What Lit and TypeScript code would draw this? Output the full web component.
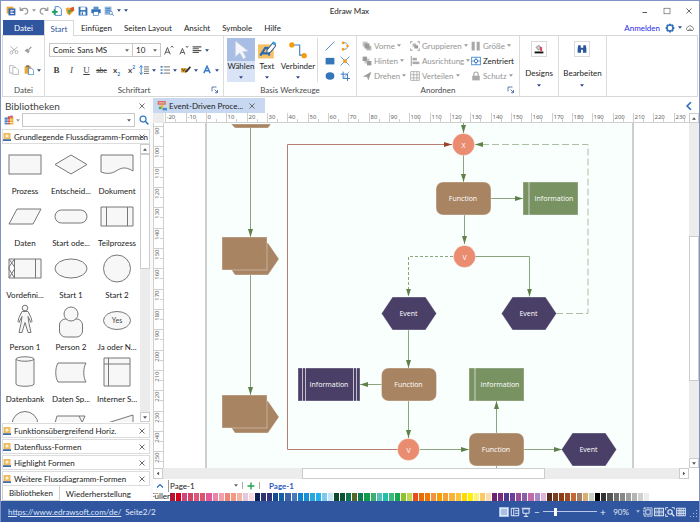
import { LitElement, html, svg, css, nothing } from "lit";
import { customElement, property } from "lit/decorators.js";
import { classMap } from "lit/directives/class-map.js";

const ICONS: Record<string, unknown> = {
  app: svg`<rect x="1" y="1" width="11" height="11" fill="#e9a83b"/><rect x="4" y="4" width="11" height="11" fill="#2f62b0"/><path d="M7 7h6M7 9.500h4M7 12h6" stroke="#fff" stroke-width="1.4"/>`,
  undo: svg`<path d="M2 2v5h5M2.500 6.500C6 2 14 3 14 8c0 3-2 5-5 5" fill="none" stroke="#9a9a9a" stroke-width="2"/>`,
  redo: svg`<path d="M14 2v5H9M13.500 6.500C10 2 2 3 2 8c0 3 2 5 5 5" fill="none" stroke="#9a9a9a" stroke-width="2"/>`,
  newdoc: svg`<path d="M5 1h6l4 4v10H5z" fill="#fff" stroke="#3f7fc4" stroke-width="1.4"/><path d="M4 5v9M0 9.500h9" stroke="#17a05e" stroke-width="2.800"/>`,
  open: svg`<path d="M1 4l5-2 2 2 6-1-1 6-6 6-4-3z" fill="#eda833"/><path d="M8 3l6-2 1 6-5 2z" fill="#d9532f"/><path d="M4 7l6-1-3 7z" fill="#4b9b4a"/>`,
  save: svg`<path d="M1 1h12l2 2v12H1z" fill="#2f6fb7"/><rect x="4" y="2" width="8" height="4.500" fill="#fff"/><rect x="4" y="9" width="8" height="5" fill="#fff"/><rect x="6" y="10" width="2" height="4" fill="#2f6fb7"/>`,
  print: svg`<rect x="4" y="1" width="8" height="4" fill="#5b8fca"/><rect x="0.500" y="5" width="15" height="6.500" rx="1" fill="#2f6fb7"/><rect x="4" y="9" width="8" height="6" fill="#fff" stroke="#2f6fb7"/>`,
  preview: svg`<rect x="1" y="1" width="11" height="13" fill="#8fb4de"/><path d="M3 4h7M3 7h7M3 10h4" stroke="#2f6fb7"/><circle cx="11" cy="11" r="2.500" fill="#fff" stroke="#2f6fb7"/><path d="M13 13l2.500 2.500" stroke="#2f6fb7" stroke-width="1.500"/>`,
  cut: svg`<path d="M2 2l9 8M14 3L5 10" stroke="#a5a5a5" stroke-width="1.300"/><circle cx="4" cy="12" r="2.300" fill="none" stroke="#a5a5a5" stroke-width="1.300"/><circle cx="12" cy="11.500" r="2.300" fill="none" stroke="#a5a5a5" stroke-width="1.300"/>`,
  brush: svg`<path d="M14 1l1.500 1.500-5 5L9 6z" fill="#8c8c8c"/><path d="M7 5l4.500 4.500-3 5.500L1 9z" fill="#a0a0a0"/>`,
  copy: svg`<path d="M1 1h6l3 3v9H1z" fill="#fff" stroke="#a8a8a8" stroke-width="1.200"/><path d="M6 4h5l4 4v7H6z" fill="#fff" stroke="#a8a8a8" stroke-width="1.200"/>`,
  paste: svg`<rect x="1" y="2" width="10" height="12" fill="#eba83a"/><rect x="3.500" y="0.500" width="5" height="3" fill="#6d6d6d"/><path d="M7 5h5l3.500 3.500V15.500H7z" fill="#fff" stroke="#3f7fc4" stroke-width="1.300"/>`,
  align: svg`<path d="M1 3h14M1 6h10M1 9h14M1 12h10" stroke="#555" stroke-width="1.700"/>`,
  spacing: svg`<path d="M3.500 1v14M1 4l2.500-3L6 4M1 12l2.500 3L6 12" fill="none" stroke="#3f87cf" stroke-width="1.600"/><path d="M8 3h8M8 6.500h8M8 10h8M8 13.500h8" stroke="#555" stroke-width="1.300"/>`,
  list: svg`<path d="M1 3h3M1 8h3M1 13h3" stroke="#3f7fc4" stroke-width="2.600"/><path d="M6 3h10M6 8h10M6 13h10" stroke="#555" stroke-width="1.300"/>`,
  marker: svg`<path d="M0 5h9v7H0z" fill="#e39a22"/><path d="M7 9l7-7 2 2-6 7-4 1z" fill="#39393c"/><path d="M2 6l2 4 2-4" stroke="#333" fill="none" stroke-width="1.200"/>`,
  fontcolor: svg`<path d="M3 13L8 2l5 11M5 9h6" fill="none" stroke="#3b7dc6" stroke-width="2.400"/>`,
  pointer: svg`<path d="M3 0v14l4-3.500 3 5.500 2.500-1.400-3-5.200 5-.4z" fill="#f4f6fa" stroke="#c4cbdc" stroke-width="0.500"/>`,
  text: svg`<rect x="0" y="3" width="14" height="12.500" fill="#f6c169"/><path d="M2 13L6.500 6h2l1.500 7M4 11h5.500" stroke="#2c6bb0" stroke-width="2" fill="none"/><path d="M8 8l5-6 3 2-5 6-3 1z" fill="#fff" stroke="#2c5c95" stroke-width="0.900"/><path d="M13 1l3 2" stroke="#3fa0d8" stroke-width="2"/>`,
  connector: svg`<path d="M3 3.500h6.500v9H13" fill="none" stroke="#3f7fc4" stroke-width="1"/><circle cx="2.500" cy="3.500" r="2.300" fill="#f59a0a"/><circle cx="13.500" cy="13" r="2.300" fill="#f59a0a"/>`,
  line: svg`<path d="M1 15L15 1" stroke="#3f7fc4" stroke-width="1.400"/>`,
  arc: svg`<path d="M4 2.500c8 0 8 3 8 5.500s0 5.500-8 5.500" fill="none" stroke="#3f7fc4" stroke-width="1.200"/><circle cx="5" cy="2.800" r="2.200" fill="#f59a0a"/><circle cx="12" cy="8" r="2" fill="#f59a0a"/><circle cx="5" cy="13.200" r="2.200" fill="#f59a0a"/>`,
  rect: svg`<rect x="1" y="3" width="14" height="10.500" fill="#3576b8"/>`,
  cross: svg`<path d="M1 1l14 14M15 1L1 15" stroke="#3f7fc4" stroke-width="1.300"/><circle cx="8" cy="8" r="3" fill="#f59a0a"/>`,
  ellipse: svg`<ellipse cx="8" cy="8" rx="7" ry="6" fill="#3576b8"/>`,
  crop: svg`<path d="M5 1v11h11M1 5h11v11" fill="none" stroke="#3f7fc4" stroke-width="1.600"/><path d="M5 12L15 1" stroke="#3f7fc4"/>`,
  front: svg`<rect x="1" y="1" width="8" height="8" fill="#c4c4c4"/><rect x="7" y="8" width="8" height="7" fill="#b4b4b4"/><rect x="4" y="4" width="8" height="8" fill="#9a9a9a"/>`,
  back: svg`<rect x="4" y="4" width="8" height="8" fill="#c8c8c8"/><rect x="1" y="1" width="7" height="7" fill="#9a9a9a"/><rect x="8" y="8" width="7" height="7" fill="#9a9a9a"/>`,
  rotate: svg`<path d="M1 9L15 1l-5 14-2-6z" fill="#9a9a9a"/>`,
  group: svg`<rect x="4" y="4" width="6" height="5" fill="#b8b8b8"/><rect x="7" y="7" width="6" height="5" fill="#999"/><path d="M1 4V1h3M12 1h3v3M15 12v3h-3M4 15H1v-3" fill="none" stroke="#999" stroke-width="1.500"/>`,
  alignleft: svg`<path d="M2 0v16" stroke="#999" stroke-width="1.500"/><rect x="4" y="3" width="7" height="4" fill="#aaa"/><rect x="4" y="9" width="11" height="4" fill="#aaa"/>`,
  distribute: svg`<path d="M1 1h14v14H1zM1 6h14M1 11h14M6 1v14M11 1v14" fill="none" stroke="#a0a0a0" stroke-width="1.200"/>`,
  size: svg`<path d="M1 1h5v14H1zM9 1h5v14H9z" fill="#a8a8a8"/>`,
  center: svg`<rect x="1" y="2" width="14" height="12" fill="none" stroke="#4a8fd0" stroke-width="1.500"/><circle cx="8" cy="8" r="2.800" fill="none" stroke="#2f6fb7" stroke-width="1.500"/><path d="M8 2v3M8 11v3M1 8h4M11 8h4" stroke="#4a8fd0" stroke-width="1.300"/>`,
  lock: svg`<path d="M4.500 8V5a3.500 3.500 0 017 0v3" fill="none" stroke="#aaa" stroke-width="1.800"/><rect x="2" y="7.500" width="12" height="7.500" fill="#aaa"/>`,
  bucket: svg`<path d="M3 5l5-3 4 5-5 3z" fill="#c9c9c9" stroke="#777" stroke-width="0.900"/><path d="M9 4l4 1v6h-3z" fill="#d94a5c"/><rect x="1" y="12" width="14" height="3" fill="#111"/>`,
  find: svg`<path d="M2 2h4v4h4V2h4l1 5v7H9.500V9h-3v5H1V7z" fill="#2b579a"/>`,
  gear: svg`<path d="M8 1v14M1 8h14M3 3l10 10M13 3L3 13" stroke="#2f6fb7" stroke-width="3"/><circle cx="8" cy="8" r="4.800" fill="#fff" stroke="#2f6fb7" stroke-width="2.400"/>`,
  cloud: svg`<path d="M4 12a3 3 0 01.5-5.500 4 4 0 017 0A3 3 0 0112 12zM5 12l3-3 3 3" fill="none" stroke="#666" stroke-width="1.300"/>`,
  min: svg`<path d="M3 11h9" stroke="#555" stroke-width="2"/>`,
  max: svg`<rect x="2" y="2.500" width="12" height="11" fill="none" stroke="#666" stroke-width="1.400"/>`,
  close: svg`<path d="M3 3l10 10M13 3L3 13" stroke="#555" stroke-width="1.700"/>`,
  launcher: svg`<path d="M2 11V2h9M7 7l6 6M13 8v5.500H8" fill="none" stroke="#3a5a94" stroke-width="1.600"/>`,
  books: svg`<rect x="1" y="4" width="5" height="11" fill="#3f7fc4"/><rect x="6" y="2" width="4" height="13" fill="#d9533a"/><rect x="10" y="3" width="5" height="12" fill="#f0a72f"/><path d="M1 8h14M1 12h14" stroke="#fff"/><rect x="10" y="1" width="4" height="3" fill="#c0489a"/>`,
  search: svg`<circle cx="6.500" cy="6.500" r="4.800" fill="none" stroke="#2f76c0" stroke-width="1.900"/><path d="M10 10l5 5" stroke="#2f76c0" stroke-width="2.400"/>`,
  library: svg`<rect x="1" y="0" width="14" height="13" fill="#f0bb5e"/><circle cx="8" cy="6" r="3.200" fill="#fff3d8"/><rect x="0" y="12.500" width="16" height="3.500" fill="#3d6ba8"/>`,
  doc: svg`<rect x="1" y="0" width="13" height="6" rx="1" fill="#dc6c5c"/><path d="M3 3h9" stroke="#fff"/><rect x="6" y="6" width="4" height="7" fill="#f0bb3e"/><rect x="3" y="9" width="4" height="4" fill="#4ba864"/><rect x="9" y="11" width="7" height="4" fill="#3f8fd4"/>`,
  left: svg`<path d="M11 2L5 8l6 6" fill="none" stroke="#2a6cc0" stroke-width="2.600"/>`,
  up: svg`<path d="M2 11l6-6 6 6" fill="none" stroke="#2a6cc0" stroke-width="2.400"/>`,
  plus: svg`<path d="M8 1v14M1 8h14" stroke="#22a552" stroke-width="2.800"/>`,
  view1: svg`<rect x="2" y="2" width="12" height="12" fill="#a9bfe6" stroke="#eef3fc" stroke-width="1.800"/>`,
  view2: svg`<path d="M2 2h12v12H2zM6 2v12M8 6h6M8 10h6" fill="none" stroke="#e4ebf8" stroke-width="1.600"/>`,
  view3: svg`<path d="M1 2h14M3 3h10v7H3zM8 10v5M4.500 15h7" fill="none" stroke="#e4ebf8" stroke-width="1.600"/>`,
  fit: svg`<rect x="4.500" y="4.500" width="7" height="7" fill="none" stroke="#e4ebf8" stroke-width="1.400"/><path d="M1.500 1.500h13v13h-13z" fill="none" stroke="#e4ebf8" stroke-width="1.600" stroke-dasharray="4 1"/>`,
  pages: svg`<path d="M1 2h14v12H1zM8 2v12M1 8h14" fill="none" stroke="#e4ebf8" stroke-width="1.700"/><path d="M3 5h3M10 5h3M3 11h3M10 11h3" stroke="#e4ebf8"/>`,
  zoomarea: svg`<path d="M1 5V1h4M1 11v4h4M11 1h4v3" fill="none" stroke="#e4ebf8" stroke-width="1.400"/><circle cx="8" cy="8" r="3.500" fill="none" stroke="#e4ebf8" stroke-width="1.800"/><path d="M10.500 10.500l4.500 4.500" stroke="#e4ebf8" stroke-width="2.200"/>`,
  grid: svg`<path d="M1 2h14v12H1zM1 6h14M1 10h14M5 2v12M8 2v12M11.500 2v12" fill="none" stroke="#e4ebf8" stroke-width="1.500"/>`,
  larger: svg`<path d="M1 15L5.500 4L10 15M3 11.500h5" fill="none" stroke="#555" stroke-width="1.600"/><path d="M11 4l2-2.500L15 4" fill="none" stroke="#444" stroke-width="1.300"/>`,
  smaller: svg`<path d="M1.500 15L5.500 5.500L9.500 15M3.500 12h4" fill="none" stroke="#555" stroke-width="1.600"/><path d="M11 1.500L13 4l2-2.500" fill="none" stroke="#444" stroke-width="1.300"/>`,
};

const icon = (name: string, size = "") =>
  html`<svg class="icon ${size}" viewBox="0 0 16 16" aria-hidden="true">${ICONS[name]}</svg>`;

const caret = (kind = "") =>
  html`<svg class="caret ${kind}" viewBox="0 0 5 3" aria-hidden="true"><path d="M0 0h5L2.500 3z" /></svg>`;

const iconButton = (name: string, label: string, size = "") =>
  html`<button class="bare" aria-label=${label}>${icon(name, size)}</button>`;

const shared = css`
  * { box-sizing: border-box; }
  button, input, select { font: inherit; color: inherit; margin: 0; padding: 0; border: 0; background: none; border-radius: 0; outline: 0; }
  button { display: flex; align-items: center; justify-content: center; white-space: nowrap; }
  .icon { width: 10px; height: 10px; flex: none; display: block; }
  .icon.s { width: 8px; height: 8px; }
  .icon.m { width: 12px; height: 12px; }
  .icon.l { width: 18px; height: 18px; }
  .caret { width: 4px; height: 3px; flex: none; fill: #2f4a86; display: block; }
  .caret.gray { fill: #999; }
  .caret.dark { fill: #666; }
`;

/* ---------- Title bar, tabs and ribbon ---------- */

@customElement("app-ribbon")
class AppRibbon extends LitElement {
  static styles = [shared, css`
    :host { display: block; flex: none; }
    .title { display: grid; grid-template-columns: 1fr auto 1fr; align-items: center; height: 19px; padding: 0 6px 0 5px; }
    .title h1 { margin: 0; font-size: 8px; font-weight: 500; color: #333; }
    .quick, .quick div { display: flex; align-items: center; gap: 3px; }
    .win { display: flex; justify-content: flex-end; gap: 14px; }
    .tabs { display: flex; height: 15px; padding-left: 2px; }
    .tabs > button { padding: 0 6px; }
    .tabs .file { width: 41px; background: #2f559f; color: #fff; }
    .tabs .active { width: 30px; margin-right: 1px; padding: 0; border: 1px solid #d8d8d8; border-bottom: 0; color: #2f559f; background: #fff; margin-bottom: -1px; z-index: 1; }
    .account { display: flex; align-items: center; gap: 3px; margin-left: auto; padding-right: 4px; }
    .account a { color: #2b2bea; text-decoration: none; margin-right: 2px; }
    .ribbon { display: flex; height: 62px; border: 1px solid #d8d8d8; margin: 0 1px; }
    .group { display: flex; flex-direction: column; border-right: 1px solid #dcdcdc; padding-top: 2px; flex: none; }
    .body { flex: 1; display: flex; }
    .name { height: 13px; display: flex; align-items: center; justify-content: center; position: relative; color: #4a4a4a; }
    .name button { position: absolute; right: 4px; }
    .clip { width: 42px; }
    .clip .body { display: grid; grid-template-columns: 18px 20px; grid-template-rows: 20px 20px; align-content: start; padding: 2px 0 0 2px; }
    .clip .body button:nth-child(even) { justify-content: flex-start; padding-left: 1px; }
    .row, .split { display: flex; align-items: center; }
    .split { gap: 3px; width: 21px; justify-content: flex-start; }
    .font { width: 179px; }
    .font .body { flex-direction: column; padding: 2px 0 0 4px; }
    .row { height: 20px; }
    .pick { display: grid; align-items: center; height: 14px; border: 1px solid #c8c8c8; width: 84px; }
    .pick.num { width: 28px; border-left: 0; }
    .pick > * { grid-area: 1 / 1; }
    .pick select { appearance: none; width: 100%; padding-left: 3px; color: #222; }
    .pick .caret { justify-self: end; margin-right: 3px; pointer-events: none; }
    .row .bare { width: 15px; }
    .row .split.last { margin-left: 1px; }
    .glyph { width: 15px; font-family: "Liberation Serif", serif; font-size: 9px; color: #444; }
    .glyph.bold { font-weight: bold; }
    .glyph.italic { font-style: italic; }
    .glyph.under { text-decoration: underline; }
    .glyph.strike { text-decoration: line-through; font-family: Lato, sans-serif; font-size: 7px; }
    .glyph.sans { font-family: Lato, sans-serif; font-weight: bold; font-size: 8px; }
    .glyph sub, .glyph sup { font-size: 5px; line-height: 0; color: #3f7fc4; }
    .tools { width: 133px; }
    .tools .body { padding-left: 3px; }
    .tool { flex-direction: column; width: 28px; height: 44px; }
    .tool .art { height: 23px; display: grid; place-items: center; width: 100%; }
    .tool .cap { height: 21px; line-height: 11px; display: flex; flex-direction: column; align-items: center; justify-content: space-between; width: 100%; padding-bottom: 3px; }
    .tool.on { background: #d9e4f6; }
    .tool.on .art { background: #a9bee4; }
    .tool.slim { width: 24px; }
    .tool.wide { width: 38px; }
    .draw { display: grid; grid-template-columns: 15px 15px; grid-template-rows: repeat(3, 15px); border-left: 1px solid #dcdcdc; padding-left: 4px; height: 44px; }
    .arrange { width: 163px; }
    .arrange .body { display: grid; grid-template-columns: 48px 61px 50px; grid-template-rows: repeat(3, 15px); padding-left: 5px; }
    .arrange .body button { justify-content: flex-start; gap: 2px; color: #949494; }
    .arrange .body button.enabled { color: #222; }
    .big { width: 39px; align-items: center; padding-top: 5px; }
    .big.wide { width: 48px; }
    .big button { flex-direction: column; }
    .box { border: 1px solid #dadada; width: 16px; height: 16px; display: grid; place-items: center; margin-bottom: 10px; }
    .big .caret { margin-top: 5px; }
  `];

  render() {
    const arrange: [string, string, boolean][] = [
      ["front", "Vorne", false], ["group", "Gruppieren", false], ["size", "Größe", false],
      ["back", "Hinten", false], ["alignleft", "Ausrichtung", false], ["center", "Zentriert", true],
      ["rotate", "Drehen", false], ["distribute", "Verteilen", false], ["lock", "Schutz", false],
    ];
    return html`
      <header class="title">
        <div class="quick">
          ${icon("app")}${iconButton("undo", "Rückgängig")}${caret("gray")}
          ${iconButton("redo", "Wiederholen")}
          <div>
            ${iconButton("newdoc", "Neu")}${iconButton("open", "Öffnen")}${iconButton("save", "Speichern")}
            ${iconButton("print", "Drucken")}${iconButton("preview", "Vorschau")}${caret()}${caret()}
          </div>
        </div>
        <h1>Edraw Max</h1>
        <div class="win">
          ${iconButton("min", "Minimieren", "s")}${iconButton("max", "Maximieren", "s")}${iconButton("close", "Schließen", "s")}
        </div>
      </header>
      <nav class="tabs">
        <button class="file">Datei</button>
        <button class="active">Start</button>
        ${["Einfügen", "Seiten Layout", "Ansicht", "Symbole", "Hilfe"].map((t) => html`<button>${t}</button>`)}
        <div class="account">
          <a href="#anmelden">Anmelden</a>${iconButton("gear", "Einstellungen")}${caret()}${iconButton("cloud", "Cloud")}
        </div>
      </nav>
      <div class="ribbon">
        <section class="group clip">
          <div class="body">
            ${iconButton("cut", "Ausschneiden")}${iconButton("brush", "Format übertragen", "s")}
            ${iconButton("copy", "Kopieren")}<button class="split" aria-label="Einfügen">${icon("paste")}${caret()}</button>
          </div>
          <div class="name">Datei</div>
        </section>
        <section class="group font">
          <div class="body">
            <div class="row">
              <label class="pick"><select aria-label="Schriftart"><option>Comic Sans MS</option></select>${caret("dark")}</label>
              <label class="pick num"><select aria-label="Schriftgröße"><option>10</option></select>${caret("dark")}</label>
              ${iconButton("larger", "Schrift vergrößern")}${iconButton("smaller", "Schrift verkleinern")}
              <button class="split last" aria-label="Ausrichten">${icon("align")}${caret()}</button>
            </div>
            <div class="row">
              <button class="glyph bold">B</button><button class="glyph italic">I</button>
              <button class="glyph under">U</button><button class="glyph strike">abc</button>
              <button class="glyph sans"><span>x<sub>2</sub></span></button>
              <button class="glyph sans"><span>x<sup>2</sup></span></button>
              ${["spacing", "list", "marker", "fontcolor"].map((n) => html`<button class="split" aria-label=${n}>${icon(n)}${caret()}</button>`)}
            </div>
          </div>
          <div class="name">Schriftart${iconButton("launcher", "Schriftart öffnen", "s")}</div>
        </section>
        <section class="group tools">
          <div class="body">
            <button class="tool on"><span class="art">${icon("pointer", "l")}</span><span class="cap">Wählen${caret()}</span></button>
            <button class="tool slim"><span class="art">${icon("text", "l")}</span><span class="cap">Text${caret()}</span></button>
            <button class="tool wide"><span class="art">${icon("connector", "l")}</span><span class="cap">Verbinder${caret()}</span></button>
            <div class="draw">
              ${["line", "arc", "rect", "cross", "ellipse", "crop"].map((n) => iconButton(n, n))}
            </div>
          </div>
          <div class="name">Basis Werkzeuge</div>
        </section>
        <section class="group arrange">
          <div class="body">
            ${arrange.map(([n, t, on]) => html`<button class=${classMap({ enabled: on })}>${icon(n)}${t}${on ? nothing : caret("gray")}</button>`)}
          </div>
          <div class="name">Anordnen${iconButton("launcher", "Anordnen öffnen", "s")}</div>
        </section>
        <section class="group big"><button><span class="box">${icon("bucket")}</span>Designs${caret()}</button></section>
        <section class="group big wide"><button><span class="box">${icon("find")}</span>Bearbeiten${caret()}</button></section>
      </div>`;
  }
}

/* ---------- Scroll bar ---------- */

@customElement("scroll-track")
class ScrollTrack extends LitElement {
  @property({ type: Boolean, reflect: true }) horizontal = false;
  @property({ type: Number }) start = 0;
  @property({ type: Number }) size = 40;
  static styles = [shared, css`
    :host { display: flex; flex-direction: column; width: 10px; background: #ececec; }
    :host([horizontal]) { flex-direction: row; width: auto; height: 11px; }
    button { flex: none; width: 10px; height: 10px; background: #fff; border: 1px solid #ccc; }
    :host([horizontal]) button { height: 11px; }
    .caret { fill: #555; }
    .up { transform: rotate(180deg); }
    .left { transform: rotate(90deg); }
    .right { transform: rotate(270deg); }
    .track { flex: 1; display: flex; flex-direction: inherit; }
    .thumb { background: #fff; border: 1px solid #ccc; }
  `];
  render() {
    const [a, b] = this.horizontal ? ["left", "right"] : ["up", "down"];
    return html`
      <button aria-label=${a}>${caret(a)}</button>
      <div class="track">
        <div style="flex:${this.start} 0 0"></div>
        <div class="thumb" style="flex:${this.size} 0 0"></div>
        <div style="flex:${100 - this.start - this.size} 0 0"></div>
      </div>
      <button aria-label=${b}>${caret(b)}</button>`;
  }
}

/* ---------- Shape libraries ---------- */

const SHAPES: [string, unknown][] = [
  ["Prozess", svg`<rect x="4" y="8" width="32" height="19"/>`],
  ["Entscheid...", svg`<path d="M4 17.500L20 8l16 9.500L20 27z"/>`],
  ["Dokument", svg`<path d="M4 8h32v16c-8-5-12-3-17 0s-10 3-15 1z"/>`],
  ["Daten", svg`<path d="M12 10h24l-8 15H4z"/>`],
  ["Start ode...", svg`<rect x="4" y="11" width="32" height="13" rx="6.500"/>`],
  ["Teilprozess", svg`<path d="M4 8h32v19H4zM9.500 8v19M30.500 8v19"/>`],
  ["Vordefini...", svg`<path d="M4 8h32v19H4zM9.500 8v19M30.500 8v19M4 8l5.500 8M9.500 8L4 16v2l5.500 9M9.500 18L4 27"/>`],
  ["Start 1", svg`<ellipse cx="20" cy="17.500" rx="16" ry="9.500"/>`],
  ["Start 2", svg`<circle cx="20" cy="17.500" r="13.500"/>`],
  ["Person 1", svg`<circle cx="20" cy="5" r="2.800"/><path d="M17 8.500h6l3 6 1 4-1 1-3-6 1 7 2 9h-3l-3-10-3 10h-3l2-9 1-7-3 6-1-1 1-4z"/>`],
  ["Person 2", svg`<rect x="8.500" y="16" width="23" height="18" rx="6"/><circle cx="20" cy="11" r="7"/>`],
  ["Ja oder N...", svg`<ellipse cx="20" cy="17.500" rx="13.500" ry="9"/><text x="20" y="20" text-anchor="middle">Yes</text>`],
  ["Datenbank", svg`<path d="M11 4v25c0 3 18 3 18 0V4"/><ellipse cx="20" cy="4" rx="9" ry="2.200"/>`],
  ["Daten Sp...", svg`<path d="M7 8h28c-3 5-3 14 0 19H7c-3-5-3-14 0-19z"/>`],
  ["Interner S...", svg`<path d="M7 3h26v28H7zM11.500 3v28M7 9h26"/>`],
  ["", svg`<circle cx="20" cy="17.500" r="13"/>`],
  ["", svg`<path d="M6 9h28l-6 14H2zM28 9l5 10"/>`],
  ["", svg`<path d="M4 18L36 8v20H4z"/>`],
];

@customElement("library-panel")
class LibraryPanel extends LitElement {
  static styles = [shared, css`
    :host { display: flex; flex-direction: column; min-height: 0; padding: 2px 0 0 1px; background: #fff; }
    .head { display: flex; align-items: center; justify-content: space-between; height: 14px; padding: 0 4px 0 3px; flex: none; }
    h2 { margin: 0; font-size: 10px; font-weight: 400; color: #444; }
    .search { display: flex; align-items: center; gap: 2px; height: 14px; padding: 0 1px 0 2px; flex: none; }
    .search .combo { flex: 1; display: flex; align-items: center; height: 14px; border: 1px solid #c8c8c8; margin-right: 2px; padding-right: 3px; }
    .combo input { flex: 1; min-width: 0; }
    .bar { display: flex; align-items: center; gap: 3px; height: 15px; border: 1px solid #dcdcdc; padding: 0 3px 0 0; margin-top: 1px; overflow: hidden; flex: none; color: #222; }
    .bar.open { margin-top: 2px; }
    .bar span { flex: 1; min-width: 0; white-space: nowrap; }
    .list { flex: 1; min-height: 0; display: flex; overflow: hidden; }
    .shapes { flex: 1; display: grid; grid-template-columns: repeat(3, 1fr); grid-auto-rows: 52px; height: 100%; overflow: hidden; padding-top: 3px; }
    .shapes button { flex-direction: column; justify-content: flex-start; }
    .shapes svg { width: 40px; height: 36px; flex: none; fill: #f7f7f7; stroke: #777; stroke-width: 1; margin-bottom: 2px; }
    .shapes text { fill: #444; stroke: none; font-size: 7px; }
    .tabs { display: flex; height: 15px; flex: none; }
    .tabs button { padding: 0 6px; }
    .tabs .on { border: 1px solid #d0d0d0; border-top: 0; }
  `];
  render() {
    return html`
      <div class="head"><h2>Bibliotheken</h2>${iconButton("close", "Schließen", "s")}</div>
      <div class="search">
        ${icon("books")}${caret("gray")}
        <label class="combo"><input aria-label="Formen suchen" />${caret("dark")}</label>
        ${iconButton("search", "Suchen")}
      </div>
      <div class="bar open">${icon("library", "s")}<span>Grundlegende Flussdiagramm-Formen</span>${icon("close", "s")}</div>
      <div class="list">
        <div class="shapes">
          ${SHAPES.map(([t, s]) => html`<button><svg viewBox="0 0 40 36">${s}</svg>${t}</button>`)}
        </div>
        <scroll-track .size=${44}></scroll-track>
      </div>
      ${["Funktionsübergreifend Horiz.", "Datenfluss-Formen", "Highlight Formen", "Weitere Flussdiagramm-Formen"].map(
        (t) => html`<div class="bar">${icon("library", "s")}<span>${t}</span>${iconButton("close", "Schließen", "s")}</div>`)}
      <div class="tabs"><button class="on">Bibliotheken</button><button>Wiederherstellung</button></div>`;
  }
}

/* ---------- Drawing ---------- */

const STEP = 61 / 3;
const GREEN = "#789262";
const BROWN = "#a98463";
const NAVY = "#4a4067";

const label = (x: number, y: number, t: string) => svg`<text class="label" x=${x} y=${y + 3}>${t}</text>`;
const func = (x: number, y: number) =>
  svg`<rect class="node" x=${x} y=${y} width="55" height="33" rx="7" fill=${BROWN}/>${label(x + 27, y + 16, "Function")}`;
const event = (x: number, y: number) =>
  svg`<path class="node" d="M${x} ${y + 16.5}l11-16.500h33l11 16.500l-11 16.500h-33z" fill=${NAVY}/>${label(x + 27, y + 16, "Event")}`;
const info = (x: number, y: number) =>
  svg`<rect class="node" x=${x} y=${y} width="55" height="33" fill=${GREEN}/><path class="rule" d="M${x + 6} ${y}v33"/>${label(x + 31, y + 16, "Information")}`;
const gate = (x: number, y: number, t: string) =>
  svg`<circle class="node" cx=${x} cy=${y} r="11" fill="#e98c70"/>${label(x, y, t)}`;
const stack = (x: number, y: number) =>
  svg`<path class="node" d="M${x + 2} ${y + 22}l11-16h33l11 16l-11 16h-33z" fill=${BROWN}/><rect class="node" x=${x} y=${y} width="45" height="33" fill=${BROWN}/>`;

@customElement("drawing-area")
class DrawingArea extends LitElement {
  static styles = [shared, css`
    :host { display: flex; flex-direction: column; min-width: 0; min-height: 0; padding-top: 1px; }
    .docs { display: flex; align-items: center; height: 15px; flex: none; }
    .doc { display: flex; align-items: center; gap: 2px; height: 15px; padding: 0 9px 0 4px; background: #c8d8f1; color: #222; white-space: nowrap; }
    .doc button { margin-left: 3px; }
    .docs > button { margin-left: auto; margin-right: 5px; }
    .sheet { flex: 1; min-height: 0; display: grid; grid-template-columns: 11px 1fr 10px; grid-template-rows: 10px 1fr 11px; }
    .sheet > svg { width: 100%; height: 100%; min-width: 0; min-height: 0; display: block; overflow: hidden; }
    .corner { background: #ececec; }
    .ruler { background: #fff; stroke: #cfcfcf; }
    .ruler text { font-family: "Noto Sans", sans-serif; font-size: 6px; fill: #666; stroke: none; }
    .vscroll { grid-column: 3; grid-row: 1 / 3; }
    .hscroll { grid-column: 1 / 3; }
    .label { font-family: "Comic Sans MS", "Open Sans", sans-serif; font-size: 7px; fill: #fff; text-anchor: middle; }
    .node { stroke: #fff; stroke-opacity: 0.35; }
    .rule { stroke: #fff; stroke-opacity: 0.65; fill: none; }
    .link { stroke: #8ba67e; fill: none; marker-end: url(#tip); }
    .plain { marker-end: none; }
    .dash { stroke-dasharray: 7 3; stroke: #adbfa2; }
    .dot { stroke-dasharray: 3 2; }
    .back { stroke: #b87c70; marker-end: url(#tip-red); }
    .pages { display: flex; align-items: center; gap: 4px; height: 13px; flex: none; padding-left: 3px; }
    .pages select { appearance: none; width: 62px; border-left: 1px solid #999; padding-left: 1px; height: 12px; }
    .pages .div { width: 1px; height: 7px; background: #aaa; }
    .pages .current { color: #2b5cc0; font-weight: bold; margin-left: 5px; }
    .fill { display: flex; align-items: center; height: 9px; flex: none; }
    .fill span { width: 17px; overflow: hidden; display: flex; justify-content: flex-end; line-height: 9px; }
    .swatches { flex: 1; display: grid; grid-auto-flow: column; grid-auto-columns: 1fr; column-gap: 1px; height: 8px; margin-right: 50px; }
  `];

  hRuler() {
    const marks = Array.from({ length: 26 }, (_, i) => i - 2);
    return svg`${marks.map((m) => {
      const x = Math.round(42 + m * STEP) + 0.5;
      return svg`<path d="M${x} 0v10M${x + 10} 6v4"/><text x=${x + 1} y="6">${m * 10}</text>`;
    })}<path d="M0 9.500H2000"/>`;
  }
  vRuler() {
    const marks = Array.from({ length: 17 }, (_, i) => i + 9);
    return svg`${marks.map((m) => {
      const y = Math.round(3 + (m - 9) * STEP) + 0.5;
      return svg`<path d="M0 ${y}h11M7 ${y + 10}h4"/><text transform="rotate(-90)" text-anchor="end" x=${-y - 1} y="6">${m * 10}</text>`;
    })}<path d="M10.500 0V2000M0.500 0V2000"/>`;
  }

  render() {
    const swatches = [
      "b9122b", "d4001a", "d2457a", "cf4464", "e0567a", "d9576c", "e25a96", "e883a9", "f0a0a8", "ee8574", "f09a86", "f3b4a4", "e5c9da",
      "fbd9e4", "0d1f57", "2f3173", "33337a", "154a94", "1560a0", "3d62ac", "4a78b8", "0f84cc", "1b8fd4", "2ba6dd", "22b0ec", "7cc8ee", "c4e4f6",
      "0d4a2c", "0e5236", "13734f", "56672a", "0f7a50", "0e9c46", "3fae6f", "55bfb8", "1fc0a8", "3cb878", "14a650", "8fc22e", "c0d850",
      "e84e1b", "ee6a00", "f07800", "f19345", "f5a000", "f3a030", "f9b233", "fdc23c", "ffd800", "fff200", "fff27a", "fbc968", "fbdcb0",
      "6b2272", "7b2a7c", "4f3a8e", "6a3f9a", "9c4f98", "8a5fa8", "c46aa8", "a78ac8", "ddb8d8",
      "5a2a17", "7a3f20", "8e3c14", "a04a24", "c0683a", "a57f62", "d9ad72", "c8d0c0",
      "000000", "333333", "555555", "6f6f6f", "888888", "a0a0a0", "b4b4b4", "cfcfcf", "ececec",
    ];
    return html`
      <div class="docs">
        <div class="doc">${icon("doc")}<span>Event-Driven Proce...</span>${iconButton("close", "Schließen", "s")}</div>
        ${iconButton("left", "Bereich einblenden")}
      </div>
      <div class="sheet">
        <div class="corner"></div>
        <svg class="ruler">${this.hRuler()}</svg>
        <scroll-track class="vscroll" .start=${34} .size=${43}></scroll-track>
        <svg class="ruler">${this.vRuler()}</svg>
        <svg>
          <defs>
            <marker id="tip" viewBox="0 0 8 5" refX="8" refY="2.500" markerWidth="8" markerHeight="5" orient="auto" markerUnits="userSpaceOnUse"><path d="M0 0l8 2.500L0 5z" fill="#5f8049"/></marker>
            <marker id="tip-red" viewBox="0 0 8 5" refX="8" refY="2.500" markerWidth="8" markerHeight="5" orient="auto" markerUnits="userSpaceOnUse"><path d="M0 0l8 2.500L0 5z" fill="#96452a"/></marker>
          </defs>
          <rect x="42" y="-9" width="426" height="1000" fill="#f8fffd"/>
          <path d="M42 0v1000M469 0v1000" stroke="#cbd0cf" stroke-width="2"/>
          <path class="node" d="M67 1h40l-3 4h-33z" fill=${BROWN}/>
          <path class="link" d="M86.500 5v109"/><path class="link" d="M86.500 152v120"/>
          ${stack(58, 114)}${stack(58, 272)}
          <path class="link back" d="M234 326.500H123.500v-305H288"/>
          <path class="link" d="M299.500 0v10"/>
          <path class="link" d="M299.500 32v27"/>
          <path class="link" d="M326 75.500h33"/>
          <path class="link" d="M300.500 92v29"/>
          <path class="link dot" d="M289 133.500h-44.500v40"/>
          <path class="link" d="M311 133.500h54.500v40"/>
          <path class="link dash" d="M392 190.500h32v-169H311"/>
          <path class="link" d="M244.500 206v39"/>
          <path class="link" d="M218 261.500h-22"/>
          <path class="link" d="M244.500 277v38"/>
          <path class="link" d="M256 326.500h49"/>
          <path class="link" d="M332.500 310v-32"/>
          <path class="link plain" d="M332.500 342v10"/>
          <path class="link" d="M360 326.500h38"/>
          ${gate(299.500, 21.500, "X")}${func(272, 59)}${info(359, 59)}
          ${gate(300.500, 133.500, "V")}${event(217.500, 174)}${event(337.500, 174)}
          <rect class="node" x="134" y="245" width="62" height="33" fill=${NAVY}/>
          <path class="rule" d="M138.500 245v33M141.500 245v33M189.500 245v33M192.500 245v33"/>
          ${label(165, 261, "Information")}
          ${func(217.500, 245)}${info(305, 245)}
          ${gate(244.500, 326.500, "V")}${func(305, 310)}${event(397.500, 310)}
        </svg>
        <scroll-track class="hscroll" horizontal .start=${27} .size=${47}></scroll-track>
      </div>
      <div class="pages">
        ${icon("up", "s")}
        <select aria-label="Seite"><option>Page-1</option></select>${caret("dark")}
        <i class="div"></i>${iconButton("plus", "Seite hinzufügen", "s")}<i class="div"></i>
        <button class="current">Page-1</button>
      </div>
      <div class="fill"><span>Füller</span>
        <div class="swatches">${swatches.map((c) => html`<i style="background:#${c}"></i>`)}</div>
      </div>`;
  }
}

/* ---------- Status bar ---------- */

@customElement("status-bar")
class StatusBar extends LitElement {
  static styles = [shared, css`
    :host { display: flex; align-items: center; height: 21px; flex: none; background: #3056a0; color: #e4ebf8; padding: 0 1px 0 7px; margin: 0 -1px; padding-right: 2px; padding-left: 8px; }
    a { color: #dfe8fa; margin-right: 4px; }
    .right { display: flex; align-items: center; margin-left: auto; gap: 1px; }
    .on { background: #8ea9da; }
    .sign { width: 10px; font-size: 10px; }
    input { appearance: none; width: 54px; height: 10px; background: linear-gradient(#b9c8e8, #b9c8e8) center / 100% 1px no-repeat; }
    input::-webkit-slider-thumb { appearance: none; width: 3px; height: 8px; background: #fff; }
    .value { width: 24px; text-align: center; }
    .right .caret { fill: #a9bbdf; margin: 0 2px; }
    .grip { width: 8px; height: 8px; fill: #a9bbdf; align-self: flex-end; margin-left: 3px; }
  `];
  render() {
    return html`
      <a href="https://www.edrawsoft.com/de/">https://www.edrawsoft.com/de/</a><span>Seite2/2</span>
      <div class="right">
        <button class="on" aria-label="Normal">${icon("view1")}</button>${iconButton("view2", "Gliederung")}${iconButton("view3", "Präsentation")}
        <button class="sign">−</button><input type="range" aria-label="Zoom" min="0" max="100" value="22" /><button class="sign">+</button>
        <span class="value">90%</span>${caret()}
        ${iconButton("fit", "Seite einpassen")}${iconButton("pages", "Seiten")}${iconButton("zoomarea", "Bereich zoomen")}${iconButton("grid", "Raster")}
        <svg class="grip" viewBox="0 0 8 8"><path d="M6 0h1v1H6zM6 3h1v1H6zM3 3h1v1H3zM6 6h1v1H6zM3 6h1v1H3zM0 6h1v1H0z"/></svg>
      </div>`;
  }
}

@customElement("app-root")
class AppRoot extends LitElement {
  static styles = css`
    :host {
      display: flex; flex-direction: column; height: 100vh; box-sizing: border-box; overflow: hidden;
      font: 8px/12px Lato, "Noto Sans", sans-serif; color: #222; background: #fff;
      border: 1px solid #8093c2; border-bottom: 0;
    }
    main { flex: 1; min-height: 0; display: grid; grid-template-columns: 149px 1fr; column-gap: 3px; background: #fafafa; }
    main > * { background: #fff; }
  `;
  render() {
    return html`
      <app-ribbon></app-ribbon>
      <main><library-panel></library-panel><drawing-area></drawing-area></main>
      <status-bar></status-bar>`;
  }
}
